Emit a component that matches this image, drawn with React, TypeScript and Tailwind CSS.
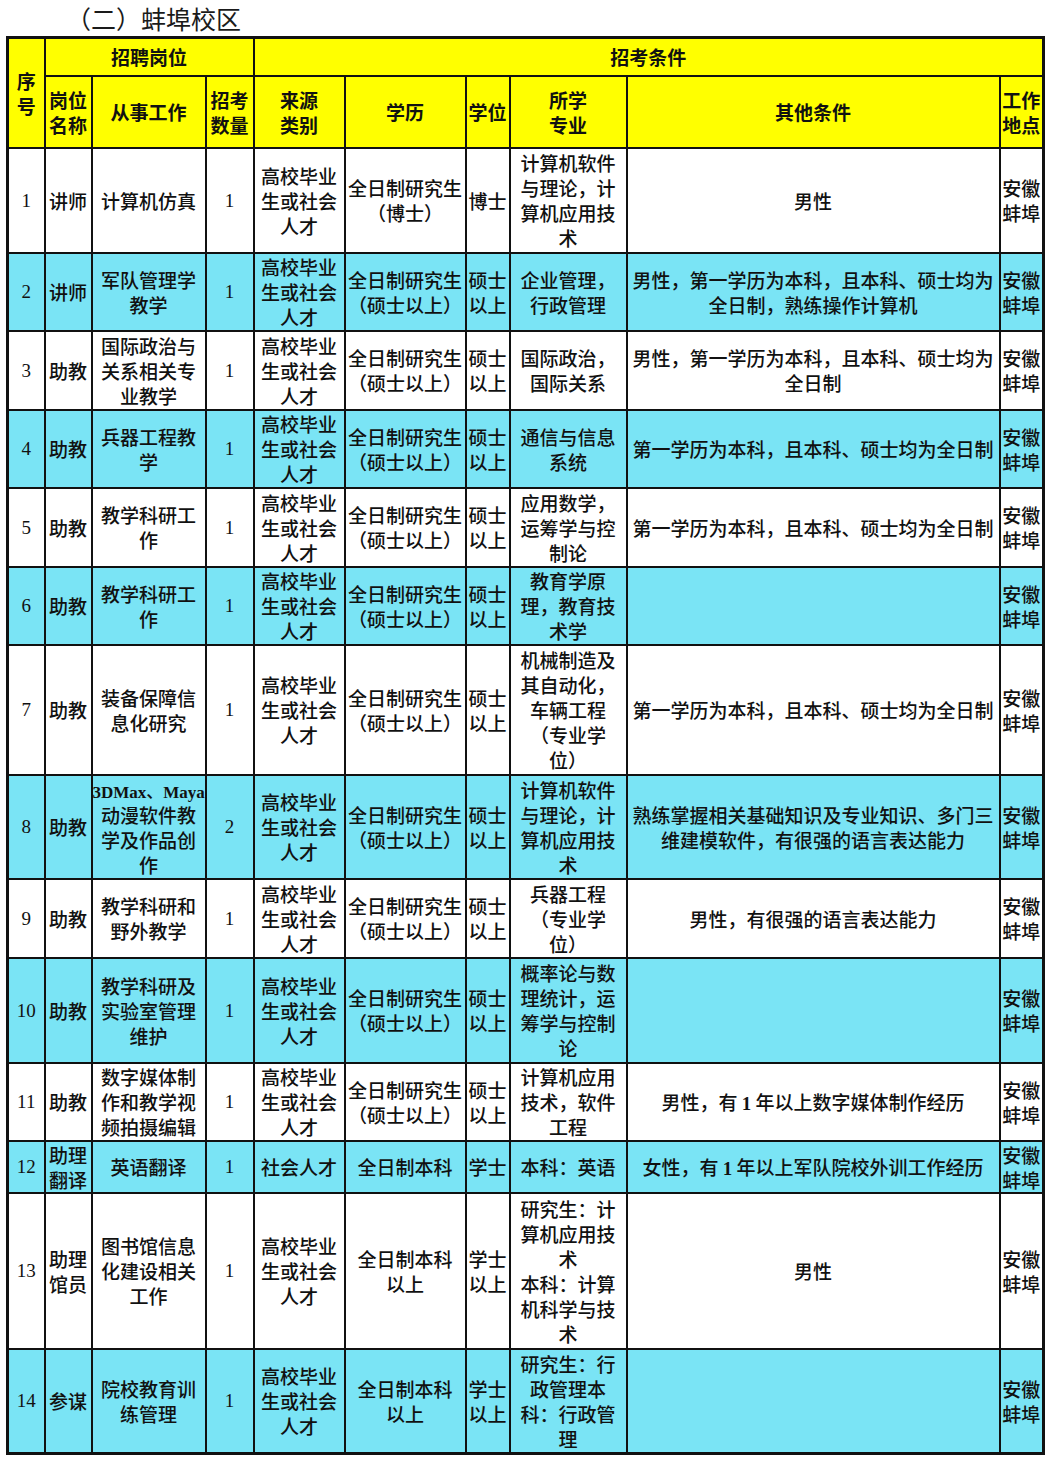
import React from "react";

type Row = {
  n: string;
  pos: string[];
  work: React.ReactNode[];
  cnt: string;
  src: string[];
  edu: string[];
  deg: string[];
  major: string[];
  other: React.ReactNode[];
  h: string;
  cyan: boolean;
};

const GX = ["高校毕业", "生或社会", "人才"];
const YJS = ["全日制研究生", "（硕士以上）"];
const SS = ["硕士", "以上"];
const AH = ["安徽", "蚌埠"];

const rows: Row[] = [
  { n: "1", pos: ["讲师"], work: ["计算机仿真"], cnt: "1", src: GX, edu: ["全日制研究生", "（博士）"], deg: ["博士"], major: ["计算机软件", "与理论，计", "算机应用技", "术"], other: ["男性"], h: "h-[105px]", cyan: false },
  { n: "2", pos: ["讲师"], work: ["军队管理学", "教学"], cnt: "1", src: GX, edu: YJS, deg: SS, major: ["企业管理，", "行政管理"], other: ["男性，第一学历为本科，且本科、硕士均为", "全日制，熟练操作计算机"], h: "h-[78px]", cyan: true },
  { n: "3", pos: ["助教"], work: ["国际政治与", "关系相关专", "业教学"], cnt: "1", src: GX, edu: YJS, deg: SS, major: ["国际政治，", "国际关系"], other: ["男性，第一学历为本科，且本科、硕士均为", "全日制"], h: "h-[79px]", cyan: false },
  { n: "4", pos: ["助教"], work: ["兵器工程教", "学"], cnt: "1", src: GX, edu: YJS, deg: SS, major: ["通信与信息", "系统"], other: ["第一学历为本科，且本科、硕士均为全日制"], h: "h-[78px]", cyan: true },
  { n: "5", pos: ["助教"], work: ["教学科研工", "作"], cnt: "1", src: GX, edu: YJS, deg: SS, major: ["应用数学，", "运筹学与控", "制论"], other: ["第一学历为本科，且本科、硕士均为全日制"], h: "h-[79px]", cyan: false },
  { n: "6", pos: ["助教"], work: ["教学科研工", "作"], cnt: "1", src: GX, edu: YJS, deg: SS, major: ["教育学原", "理，教育技", "术学"], other: [], h: "h-[78px]", cyan: true },
  { n: "7", pos: ["助教"], work: ["装备保障信", "息化研究"], cnt: "1", src: GX, edu: YJS, deg: SS, major: ["机械制造及", "其自动化，", "车辆工程", "（专业学", "位）"], other: ["第一学历为本科，且本科、硕士均为全日制"], h: "h-[130px]", cyan: false },
  { n: "8", pos: ["助教"], work: [<span key="m" className="font-['Liberation_Serif'] text-[17px] leading-[25px] font-bold">3DMax<span className="font-['Noto_Sans_CJK_SC'] font-medium text-[17px] leading-[25px]">、</span>Maya</span>, "动漫软件教", "学及作品创", "作"], cnt: "2", src: GX, edu: YJS, deg: SS, major: ["计算机软件", "与理论，计", "算机应用技", "术"], other: ["熟练掌握相关基础知识及专业知识、多门三", "维建模软件，有很强的语言表达能力"], h: "h-[104px]", cyan: true },
  { n: "9", pos: ["助教"], work: ["教学科研和", "野外教学"], cnt: "1", src: GX, edu: YJS, deg: SS, major: ["兵器工程", "（专业学", "位）"], other: ["男性，有很强的语言表达能力"], h: "h-[79px]", cyan: false },
  { n: "10", pos: ["助教"], work: ["教学科研及", "实验室管理", "维护"], cnt: "1", src: GX, edu: YJS, deg: SS, major: ["概率论与数", "理统计，运", "筹学与控制", "论"], other: [], h: "h-[105px]", cyan: true },
  { n: "11", pos: ["助教"], work: ["数字媒体制", "作和教学视", "频拍摄编辑"], cnt: "1", src: GX, edu: YJS, deg: SS, major: ["计算机应用", "技术，软件", "工程"], other: [<span key="o">男性，有 <span className="font-['Liberation_Serif'] font-bold">1</span> 年以上数字媒体制作经历</span>], h: "h-[78px]", cyan: false },
  { n: "12", pos: ["助理", "翻译"], work: ["英语翻译"], cnt: "1", src: ["社会人才"], edu: ["全日制本科"], deg: ["学士"], major: ["本科：英语"], other: [<span key="o">女性，有 <span className="font-['Liberation_Serif'] font-bold">1</span> 年以上军队院校外训工作经历</span>], h: "h-[52px]", cyan: true },
  { n: "13", pos: ["助理", "馆员"], work: ["图书馆信息", "化建设相关", "工作"], cnt: "1", src: GX, edu: ["全日制本科", "以上"], deg: ["学士", "以上"], major: ["研究生：计", "算机应用技", "术", "本科：计算", "机科学与技", "术"], other: ["男性"], h: "h-[156px]", cyan: false },
  { n: "14", pos: ["参谋"], work: ["院校教育训", "练管理"], cnt: "1", src: GX, edu: ["全日制本科", "以上"], deg: ["学士", "以上"], major: ["研究生：行", "政管理本", "科：行政管", "理"], other: [], h: "h-[105px]", cyan: true },
];

const Lines = ({ l }: { l: React.ReactNode[] }) => (
  <>
    {l.map((x, i) => (
      <div key={i} className="h-[25px] leading-[25px] overflow-visible">{x}</div>
    ))}
  </>
);

const cell = "border-2 border-[#111] text-center align-middle p-0 whitespace-nowrap";

export default function App() {
  return (
    <div className="w-[1049px] h-[1459px] bg-white text-[#111] font-['Noto_Sans_CJK_SC',sans-serif]">
      <div className="h-[36px] pl-[66px] text-[25px] leading-[37px] text-[#1a1a1a]">（二）蚌埠校区</div>
      <table className="ml-[6px] w-[1036px] table-fixed border-collapse border-[3px] border-[#111] text-[19px] leading-[25px] font-medium">
        <colgroup>
          <col className="w-[37px]" />
          <col className="w-[47px]" />
          <col className="w-[114px]" />
          <col className="w-[48px]" />
          <col className="w-[91px]" />
          <col className="w-[121px]" />
          <col className="w-[44px]" />
          <col className="w-[117px]" />
          <col className="w-[373px]" />
          <col className="w-[44px]" />
        </colgroup>
        <thead>
          <tr className="h-[38px] bg-[#ffff00] font-bold">
            <th rowSpan={2} className={cell + " font-bold"}>
              <Lines l={["序", "号"]} />
            </th>
            <th colSpan={3} className={cell + " font-bold"}>招聘岗位</th>
            <th colSpan={6} className={cell + " font-bold"}>招考条件</th>
          </tr>
          <tr className="h-[72px] bg-[#ffff00]">
            <th className={cell + " font-bold"}><Lines l={["岗位", "名称"]} /></th>
            <th className={cell + " font-bold"}>从事工作</th>
            <th className={cell + " font-bold"}><Lines l={["招考", "数量"]} /></th>
            <th className={cell + " font-bold"}><Lines l={["来源", "类别"]} /></th>
            <th className={cell + " font-bold"}>学历</th>
            <th className={cell + " font-bold"}>学位</th>
            <th className={cell + " font-bold"}><Lines l={["所学", "专业"]} /></th>
            <th className={cell + " font-bold"}>其他条件</th>
            <th className={cell + " font-bold"}><Lines l={["工作", "地点"]} /></th>
          </tr>
        </thead>
        <tbody>
          {rows.map((r) => (
            <tr key={r.n} className={r.h + " " + (r.cyan ? "bg-[#7ae4f5]" : "bg-white")}>
              <td className={cell + " font-['Liberation_Serif'] text-[19px]"}>{r.n}</td>
              <td className={cell}><Lines l={r.pos} /></td>
              <td className={cell}><Lines l={r.work} /></td>
              <td className={cell + " font-['Liberation_Serif'] text-[19px]"}>{r.cnt}</td>
              <td className={cell}><Lines l={r.src} /></td>
              <td className={cell}><Lines l={r.edu} /></td>
              <td className={cell}><Lines l={r.deg} /></td>
              <td className={cell}><Lines l={r.major} /></td>
              <td className={cell}><Lines l={r.other} /></td>
              <td className={cell}><Lines l={AH} /></td>
            </tr>
          ))}
        </tbody>
      </table>
    </div>
  );
}
